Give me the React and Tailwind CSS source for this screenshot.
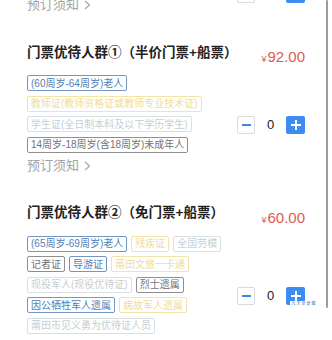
import React from "react";

const FONT = { fontFamily: '"Liberation Sans", "Noto Sans CJK SC", sans-serif' };

const tagStyles = {
  blue: "border-[#7396c2] text-[#4f7fb8]",
  yellow: "border-[#f2e3a6] text-[#f0dc9c]",
  light: "border-[#d9e0e3] text-[#c6cfd3]",
  gray: "border-[#8f8f8f] text-[#737373]",
};

const sections = [
  {
    title: "门票优待人群①（半价门票+船票）",
    price: "92.00",
    tags: [
      ["(60周岁-64周岁)老人", "blue"],
      ["教师证(教师资格证或教师专业技术证)", "yellow"],
      ["学生证(全日制本科及以下学历学生)", "light"],
      ["14周岁-18周岁(含18周岁)未成年人", "gray"],
    ],
  },
  {
    title: "门票优待人群②（免门票+船票）",
    price: "60.00",
    tags: [
      ["(65周岁-69周岁)老人", "blue"],
      ["残疾证", "yellow"],
      ["全国劳模", "light"],
      ["记者证", "gray"],
      ["导游证", "blue"],
      ["莆田文旅一卡通", "yellow"],
      ["现役军人(现役优待证)", "light"],
      ["烈士遗属", "gray"],
      ["因公牺牲军人遗属", "blue"],
      ["病故军人遗属", "yellow"],
      ["莆田市见义勇为优待证人员", "light"],
    ],
  },
];

const Stepper = () => (
  <div className="flex items-center">
    <div className="w-[18px] h-[18px] border border-[#d6dce0] rounded-[2px] bg-white flex items-center justify-center">
      <div className="w-[9px] h-[2px] bg-[#3b8ae6]" />
    </div>
    <div className="w-[31px] h-[18px] flex items-center justify-center text-[13px] text-[#222]">0</div>
    <div className="w-[19px] h-[18px] bg-[#3d8df0] rounded-[2px] flex items-center justify-center relative">
      <div className="absolute w-[10px] h-[2px] bg-white" />
      <div className="absolute w-[2px] h-[10px] bg-white" />
    </div>
  </div>
);

const Notice = () => (
  <div className="flex items-center h-[18px] text-[13px] text-[#a3a3a3]">
    <span>预订须知</span>
    <svg width="7" height="10" viewBox="0 0 7 10" className="ml-[5px]">
      <polyline points="1,1 5.5,5 1,9" fill="none" stroke="#a8a8a8" strokeWidth="1.2" />
    </svg>
  </div>
);

export default function App() {
  return (
    <div className="relative w-[332px] h-[340px] overflow-hidden bg-white" style={FONT}>
      {/* tail of the previous group */}
      <div className="flex items-start justify-between px-[27px] -mt-[4px] h-[18px]">
        <Notice />
        <div className="-mt-[11px]">
          <Stepper />
        </div>
      </div>

      {sections.map((s) => (
        <div key={s.title} className="px-[27px] pt-[29px]">
          <div className="flex items-start justify-between h-[20px]">
            <h2 className="h-[20px] flex items-center text-[13.5px] font-semibold text-[#222]">{s.title}</h2>
            <div className="mt-[3px] h-[20px] flex items-baseline text-[#e05a55]">
              <span className="text-[9px] mr-[1px]">¥</span>
              <span className="text-[15px]">{s.price}</span>
            </div>
          </div>

          <div className="mt-[12px] flex items-center justify-between">
            <div>
              <div className="w-[210px] flex flex-wrap gap-x-[4px] gap-y-[4.5px]">
                {s.tags.map(([label, tone]) => (
                  <span
                    key={label}
                    className={`h-[16px] inline-flex items-center border rounded-[2px] px-[3px] text-[10px] whitespace-nowrap bg-white ${tagStyles[tone]}`}
                  >
                    {label}
                  </span>
                ))}
              </div>
              <div className="mt-[4px]">
                <Notice />
              </div>
            </div>
            <Stepper />
          </div>
        </div>
      ))}

      {/* overlay scrollbar */}
      <div className="absolute right-[4px] top-0 w-[2px] h-[308px] bg-[#9c9c9c] rounded-full" />

      {/* watermark */}
      <div className="absolute left-[290px] top-[301px] w-[28px] h-[6px] bg-white flex items-center justify-center">
        <span className="text-[4px] leading-[4px] text-[#3a6fc0] tracking-[1px]">九天全景图</span>
      </div>
    </div>
  );
}
